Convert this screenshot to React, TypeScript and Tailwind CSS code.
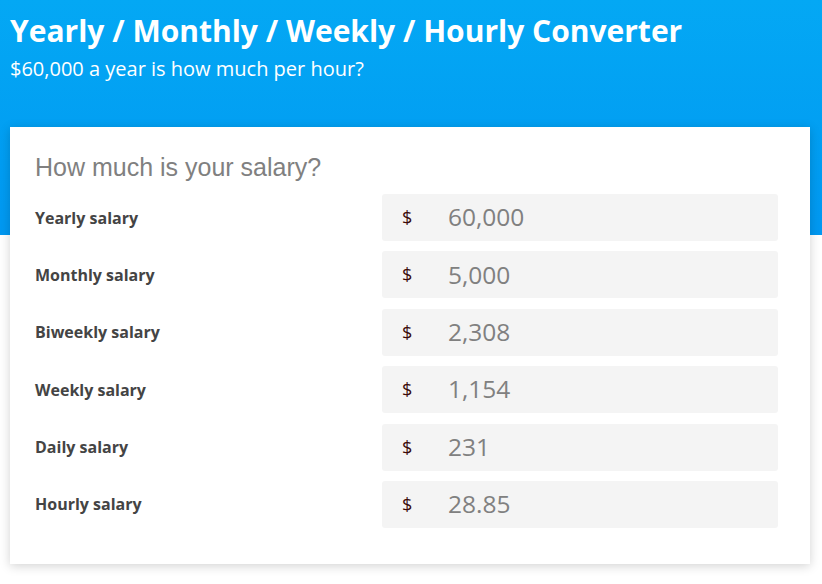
import React from 'react';

const rows = [
  { label: 'Yearly salary', value: '60,000' },
  { label: 'Monthly salary', value: '5,000' },
  { label: 'Biweekly salary', value: '2,308' },
  { label: 'Weekly salary', value: '1,154' },
  { label: 'Daily salary', value: '231' },
  { label: 'Hourly salary', value: '28.85' },
];

const App = () => {
  return (
    <div className="min-h-[584px] w-full bg-[linear-gradient(to_bottom,#04a8f4_0px,#0098f1_235px,#ffffff_235px)] font-['Open_Sans',sans-serif]">
      {/* Header */}
      <header className="px-[10px] pt-[11px]">
        <h1 className="text-[30px] font-bold leading-[40px] text-white">
          Yearly / Monthly / Weekly / Hourly Converter
        </h1>
        <p className="mt-[4px] text-[20px] leading-[28px] text-white">$60,000 a year is how much per hour?</p>
      </header>

      {/* Card */}
      <section className="ml-[10px] mt-[44px] w-[800px] bg-white pb-[36px] pl-[25px] pr-[32px] pt-[24px] shadow-[0_2px_10px_rgba(0,0,0,0.18)]">
        <h2 className="font-['Liberation_Sans',Arial,sans-serif] text-[25px] leading-[32px] text-[#808080]">
          How much is your salary?
        </h2>
        <div className="mt-[11px] flex flex-col gap-[10.4px]">
          {rows.map((row) => (
            <div key={row.label} className="flex items-center">
              <label className="w-[347px] text-[16px] font-bold text-[#444]">{row.label}</label>
              <div className="flex h-[47px] flex-1 items-center rounded-[3px] bg-[#f4f4f4] pl-[20px]">
                <span className="w-[46px] text-[18px] text-[#3a0a0a]">$</span>
                <span className="text-[24.5px] text-[#808080]">{row.value}</span>
              </div>
            </div>
          ))}
        </div>
      </section>
    </div>
  );
};

export default App;
